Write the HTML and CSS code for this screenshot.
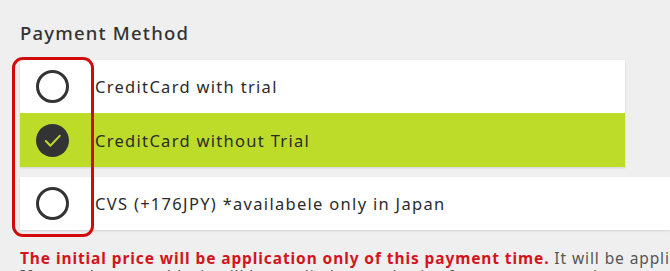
FILE: index.html
```html
<!doctype html>
<html lang="en">
  <head>
    <meta charset="UTF-8" />
    <meta name="viewport" content="width=device-width, initial-scale=1.0" />
    <title>Payment Method</title>
    <link rel="stylesheet" href="styles.css">
  </head>
  <body>
    <section class="payment">
      <h2 class="payment-title">Payment Method</h2>

      <div class="methods">
        <div class="highlight" aria-hidden="true"></div>

        <div class="method-group">
          <label class="method">
            <span class="radio"></span>
            <span class="method-name">CreditCard with trial</span>
          </label>
          <label class="method is-checked">
            <span class="radio">
              <svg viewBox="0 0 32 32" width="32" height="32">
                <circle cx="16" cy="16" r="16" fill="#333" />
                <path d="M9.5 16.5 L14 21 L23 11.5" fill="none" stroke="#bddc2a" stroke-width="2" stroke-linecap="round" stroke-linejoin="round" />
              </svg>
            </span>
            <span class="method-name">CreditCard without Trial</span>
          </label>
        </div>

        <label class="method method-wide">
          <span class="radio"></span>
          <span class="method-name">CVS (+176JPY) *availabele only in Japan</span>
        </label>
      </div>

      <p class="note">
        <span class="note-line"><strong>The initial price will be application only of this payment time.</strong> It will be applied</span>
        <span class="note-line">If you select monthly, it will be applied normal price from next renew time.</span>
      </p>
    </section>
  </body>
</html>
```

FILE: styles.css
```css
* {
  box-sizing: border-box;
}

body {
  margin: 0;
  background: #efefef;
  font-family: "Noto Sans", "Liberation Sans", sans-serif;
  color: #2b2b2b;
  overflow: hidden;
}

.payment {
  padding: 20px 0 0 20px;
}

.payment-title {
  margin: 0 0 14px;
  font-size: 18.5px;
  font-weight: 500;
  letter-spacing: 1.2px;
  line-height: 26px;
  color: #333;
}

.methods {
  position: relative;
  display: flex;
  flex-direction: column;
}

.method-group {
  margin-right: 45px;
  box-shadow: 0 1px 2px rgba(0, 0, 0, 0.12);
}

.method {
  display: flex;
  align-items: center;
  height: 53px;
  background: #fff;
  font-size: 16.5px;
  letter-spacing: 1.3px;
  white-space: nowrap;
}

.method.is-checked {
  height: 54px;
  background: #bddc2a;
}

.method-wide {
  margin-top: 10px;
  box-shadow: 0 1px 2px rgba(0, 0, 0, 0.12);
}

.radio {
  flex: none;
  width: 33px;
  height: 33px;
  margin: 0 26px 0 16px;
  border: 3.5px solid #333;
  border-radius: 50%;
}

.is-checked .radio {
  border: none;
}

.radio svg {
  display: block;
  width: 33px;
  height: 33px;
}

.highlight {
  position: absolute;
  left: -8px;
  top: -3px;
  width: 82px;
  height: 180px;
  border: 3px solid #d20a0a;
  border-radius: 11px;
  pointer-events: none;
  z-index: 1;
}

.note {
  margin: 19px 0 0;
  font-size: 15.5px;
  line-height: 18px;
  letter-spacing: 0.9px;
  color: #555;
  white-space: nowrap;
}

.note-line {
  display: block;
}

.note strong {
  color: #d4141c;
  font-weight: 700;
}
```
